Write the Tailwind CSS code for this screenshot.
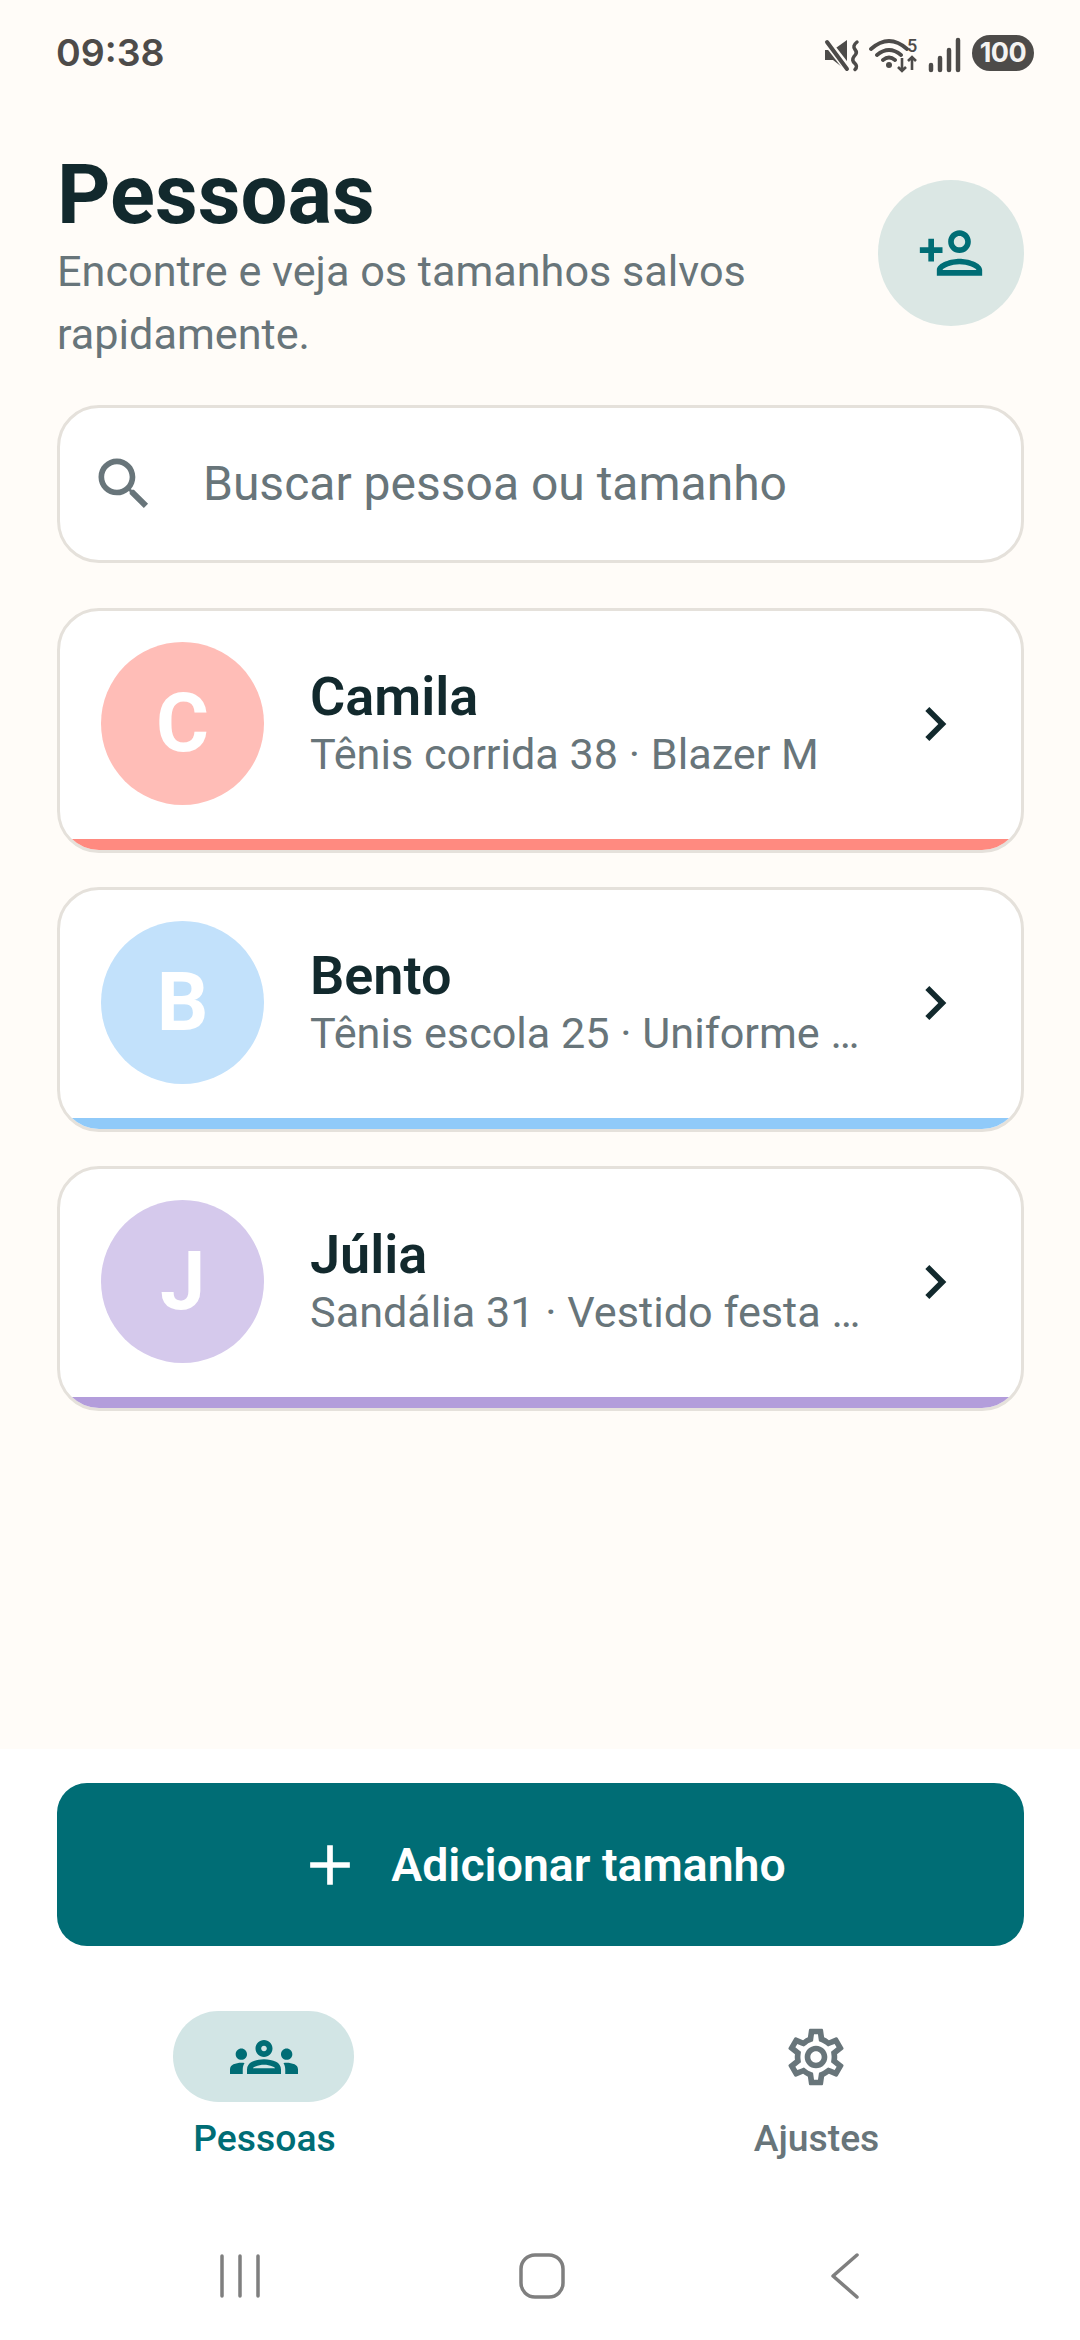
<!DOCTYPE html>
<html lang="pt">
<head>
<meta charset="utf-8">
<script src="https://cdn.jsdelivr.net/npm/@tailwindcss/browser@4"></script>
</head>
<body class="m-0">
<div class="w-[1080px] h-[2340px] flex flex-col bg-[#fffcf8] font-['Roboto',sans-serif] overflow-hidden">
  <div class="h-[106px] flex justify-between items-start pl-[56px] pr-[46px] pt-[30px] shrink-0">
    <span class="font-['Inter',sans-serif] text-[37.500px] leading-[46px] font-semibold text-[#4d4b49]">09:38</span>
    <div class="flex items-start gap-[10px]">
      <svg class="w-[140px] h-[40px] mt-[4px] text-[#4d4b49]" viewBox="42 32 140 40" fill="none" stroke="currentColor">
        <path d="M45 48h8l14 -10v31l-14 -11h-8z" fill="currentColor" stroke="none"/>
        <path d="M47 40l21 27" stroke="#fffcf8" stroke-width="8"/>
        <path d="M47 40l20 27" stroke-width="4" stroke-linecap="round"/>
        <path d="M77 40q-5 4 -2 7.500q3 3.500 -1 7q-3 4 1 7q3 3 0 6" stroke-width="3.500"  stroke-linecap="round"/>
        <path d="M91 47q18 -16 36 0M97 53q12 -10 24 0M103 58q6 -5 12 0" stroke-width="3.800" stroke-linecap="round"/>
        <circle cx="109" cy="63" r="3" fill="currentColor" stroke="none"/>
        <text x="127" y="50" font-size="18" font-weight="500" fill="currentColor" stroke="none" font-family="Roboto">5</text>
        <path d="M122 56v13M118 65l4 4l4 -4M132 68v-13M128 59l4 -4l4 4" stroke-width="2.600"/>
        <path d="M151 63v5M160 56v12M169 48v20M178 38v30" stroke-width="4.500" stroke-linecap="round"/>
      </svg>
      <div class="font-['Inter',sans-serif] w-[62px] h-[36px] mt-[5px] rounded-full bg-[#4d4b49] text-[#f4f3f1] text-[27px] tracking-[-0.5px] leading-[36px] font-bold text-center">100</div>
    </div>
  </div>

  <main class="flex-1 flex flex-col pl-[57px] pr-[56px] min-h-0">
    <div class="flex justify-between items-start pt-[44px]">
      <div class="w-[760px]">
        <h1 class="text-[83.200px] leading-[90px] font-bold text-[#12292d]">Pessoas</h1>
        <p class="text-[43.200px] leading-[63px] text-[#68757a]">Encontre e veja os tamanhos salvos rapidamente.</p>
      </div>
      <button class="w-[146px] h-[146px] mt-[30px] rounded-full bg-[#dbe7e4] flex items-center justify-center">
        <svg class="w-[68px] h-[68px] text-[#006d75]" viewBox="0 0 24 24" fill="currentColor"><path d="M15 12c2.210 0 4-1.790 4-4s-1.790-4-4-4-4 1.790-4 4 1.790 4 4 4zm0-6c1.100 0 2 .900 2 2s-.900 2-2 2-2-.900-2-2 .900-2 2-2zm0 8c-2.670 0-8 1.340-8 4v2h16v-2c0-2.660-5.330-4-8-4zm-6 4c.220-.720 3.310-2 6-2 2.700 0 5.800 1.290 6 2H9zm-3-3v-3h3v-2H6V7H4v3H1v2h3v3z"/></svg>
      </button>
    </div>

    <div class="mt-[39px] h-[158px] rounded-[42px] border-[3px] border-[#e5e1db] bg-white flex items-center pl-[30px] shrink-0">
      <svg class="w-[68px] h-[68px] text-[#68757a]" viewBox="0 0 24 24" fill="currentColor"><path d="M15.500 14h-.790l-.280-.270C15.410 12.590 16 11.110 16 9.500 16 5.910 13.090 3 9.500 3S3 5.910 3 9.500 5.910 16 9.500 16c1.610 0 3.090-.590 4.230-1.570l.270.280v.790l5 4.990L20.490 19l-4.990-5zm-6 0C7.010 14 5 11.990 5 9.500S7.010 5 9.500 5 14 7.010 14 9.500 11.990 14 9.500 14z"/></svg>
      <span class="ml-[45px] text-[48px] leading-[56px] text-[#68757a]">Buscar pessoa ou tamanho</span>
    </div>

    <div class="mt-[45px] flex flex-col gap-[34px]">
      <div class="h-[245px] rounded-[42px] border-[3px] border-[#e5e1db] bg-white overflow-hidden flex flex-col">
        <div class="flex-1 flex items-center pl-[41px] pr-[52px] pb-[3px]">
          <div class="w-[163px] h-[163px] rounded-full bg-[#ffbdb7] flex items-center justify-center text-white text-[81px] font-bold shrink-0">C</div>
          <div class="ml-[46px] flex-1 min-w-0">
            <div class="text-[54px] leading-[62px] font-semibold text-[#12292d]">Camila</div>
            <div class="text-[43.200px] leading-[54px] text-[#68757a] whitespace-nowrap">Tênis corrida 38 · Blazer M</div>
          </div>
          <svg class="w-[68px] h-[68px] shrink-0 text-[#12292d]" viewBox="0 0 24 24" fill="currentColor"><path d="M10 6L8.590 7.410 13.170 12l-4.580 4.590L10 18l6-6z"/></svg>
        </div>
        <div class="h-[11px] bg-[#ff8a80] shrink-0"></div>
      </div>
      <div class="h-[245px] rounded-[42px] border-[3px] border-[#e5e1db] bg-white overflow-hidden flex flex-col">
        <div class="flex-1 flex items-center pl-[41px] pr-[52px] pb-[3px]">
          <div class="w-[163px] h-[163px] rounded-full bg-[#c2e1fb] flex items-center justify-center text-white text-[81px] font-bold shrink-0">B</div>
          <div class="ml-[46px] flex-1 min-w-0">
            <div class="text-[54px] leading-[62px] font-semibold text-[#12292d]">Bento</div>
            <div class="text-[43.200px] leading-[54px] text-[#68757a] whitespace-nowrap">Tênis escola 25 · Uniforme …</div>
          </div>
          <svg class="w-[68px] h-[68px] shrink-0 text-[#12292d]" viewBox="0 0 24 24" fill="currentColor"><path d="M10 6L8.590 7.410 13.170 12l-4.580 4.590L10 18l6-6z"/></svg>
        </div>
        <div class="h-[11px] bg-[#90caf9] shrink-0"></div>
      </div>
      <div class="h-[245px] rounded-[42px] border-[3px] border-[#e5e1db] bg-white overflow-hidden flex flex-col">
        <div class="flex-1 flex items-center pl-[41px] pr-[52px] pb-[3px]">
          <div class="w-[163px] h-[163px] rounded-full bg-[#d5c9ec] flex items-center justify-center text-white text-[81px] font-bold shrink-0">J</div>
          <div class="ml-[46px] flex-1 min-w-0">
            <div class="text-[54px] leading-[62px] font-semibold text-[#12292d]">Júlia</div>
            <div class="text-[43.200px] leading-[54px] text-[#68757a] whitespace-nowrap">Sandália 31 · Vestido festa …</div>
          </div>
          <svg class="w-[68px] h-[68px] shrink-0 text-[#12292d]" viewBox="0 0 24 24" fill="currentColor"><path d="M10 6L8.590 7.410 13.170 12l-4.580 4.590L10 18l6-6z"/></svg>
        </div>
        <div class="h-[11px] bg-[#b39ddb] shrink-0"></div>
      </div>
    </div>
  </main>

  <footer class="h-[591px] bg-white shrink-0 flex flex-col">
    <div class="pl-[57px] pr-[56px] pt-[34px]">
      <button class="w-full h-[163px] rounded-[30px] bg-[#006d75] flex items-center justify-center text-white text-[46.400px] leading-[54px] font-semibold">
        <svg class="w-[68px] h-[68px] mr-[27px] ml-[1px]" viewBox="0 0 24 24" fill="currentColor"><path d="M19 13h-6v6h-2v-6H5v-2h6V5h2v6h6v2z"/></svg>
        Adicionar tamanho
      </button>
    </div>
    <nav class="mt-[65px] flex justify-between pl-[173px] pr-[174px]">
      <div class="w-[181px] flex flex-col items-center">
        <div class="w-[181px] h-[91px] rounded-full bg-[#d2e5e5] flex items-center justify-center">
          <svg class="w-[68px] h-[68px] text-[#006d75]" viewBox="0 0 24 24" fill="currentColor"><path d="M4 13c1.100 0 2-.900 2-2 0-1.100-.900-2-2-2s-2 .900-2 2c0 1.100.900 2 2 2zm1.130 1.100C4.760 14.040 4.390 14 4 14c-.990 0-1.930.210-2.780.580C.480 14.900 0 15.620 0 16.430V18h4.500v-1.610c0-.830.230-1.610.630-2.290zM20 13c1.100 0 2-.900 2-2 0-1.100-.900-2-2-2s-2 .900-2 2c0 1.100.900 2 2 2zm4 3.430c0-.810-.480-1.530-1.220-1.850C21.930 14.210 20.990 14 20 14c-.390 0-.760.040-1.130.100.400.680.630 1.460.630 2.290V18H24v-1.570zM16.240 13.650c-1.170-.520-2.610-.900-4.240-.900-1.630 0-3.070.390-4.240.900C6.680 14.130 6 15.210 6 16.390V18h12v-1.610c0-1.180-.680-2.260-1.760-2.740zM8.070 16c.090-.230.130-.390.910-.690.970-.380 1.990-.560 3.020-.560s2.050.180 3.020.560c.770.300.810.460.910.690H8.070zM12 8c.550 0 1 .450 1 1s-.450 1-1 1-1-.450-1-1 .450-1 1-1m0-2c-1.660 0-3 1.340-3 3s1.340 3 3 3 3-1.340 3-3-1.340-3-3-3z"/></svg>
        </div>
        <span class="mt-[12px] pl-[2px] text-[37.300px] leading-[48px] font-medium text-[#006d75]">Pessoas</span>
      </div>
      <div class="w-[181px] flex flex-col items-center">
        <div class="w-[181px] h-[91px] flex items-center justify-center">
          <svg class="w-[68px] h-[68px] text-[#68757a]" viewBox="0 0 24 24" fill="currentColor"><path d="M19.430 12.980c.040-.320.070-.640.070-.980 0-.340-.030-.660-.070-.980l2.110-1.650c.190-.150.240-.420.120-.640l-2-3.460c-.090-.160-.260-.250-.440-.250-.060 0-.120.010-.170.030l-2.490 1c-.520-.400-1.080-.730-1.690-.980l-.380-2.650C14.460 2.180 14.250 2 14 2h-4c-.250 0-.460.180-.490.420l-.380 2.650c-.610.250-1.170.590-1.690.980l-2.490-1c-.060-.020-.120-.030-.180-.030-.170 0-.340.090-.430.250l-2 3.460c-.130.220-.070.490.120.640l2.110 1.650c-.040.320-.070.650-.070.980 0 .330.030.660.070.980l-2.110 1.650c-.190.150-.240.420-.120.640l2 3.460c.090.160.260.250.440.250.060 0 .120-.010.170-.030l2.490-1c.520.400 1.080.730 1.690.980l.380 2.650c.030.240.240.420.490.420h4c.250 0 .460-.180.490-.420l.380-2.650c.610-.250 1.170-.590 1.690-.980l2.490 1c.060.020.120.030.180.030.170 0 .340-.090.430-.250l2-3.460c.120-.220.070-.490-.120-.640l-2.110-1.650zm-1.980-1.710c.040.310.050.520.050.730 0 .210-.020.430-.050.730l-.140 1.130.890.700 1.080.84-.700 1.210-1.270-.510-1.040-.420-.900.680c-.430.320-.840.560-1.250.730l-1.060.43-.160 1.130-.200 1.350h-1.400l-.190-1.350-.160-1.130-1.060-.43c-.430-.180-.830-.410-1.230-.710l-.910-.700-1.060.43-1.270.510-.700-1.210 1.080-.840.890-.700-.140-1.130c-.030-.310-.050-.540-.050-.740s.02-.430.05-.730l.14-1.130-.89-.700-1.080-.84.700-1.210 1.270.51 1.040.42.900-.68c.430-.320.840-.560 1.250-.73l1.060-.43.160-1.130.200-1.350h1.390l.190 1.350.160 1.130 1.060.43c.430.180.83.410 1.230.71l.910.700 1.060-.43 1.270-.51.700 1.210-1.070.85-.89.700.140 1.130zM12 8c-2.210 0-4 1.790-4 4s1.790 4 4 4 4-1.790 4-4-1.790-4-4-4zm0 6c-1.100 0-2-.900-2-2s.900-2 2-2 2 .900 2 2-.900 2-2 2z"/></svg>
        </div>
        <span class="mt-[12px] pl-[2px] text-[37.300px] leading-[48px] font-medium text-[#68757a]">Ajustes</span>
      </div>
    </nav>
    <div class="mt-[91px] flex justify-between items-center px-[220px]">
      <svg class="w-[40px] h-[46px] text-[#7f7f7f]" viewBox="0 0 40 46" fill="none" stroke="currentColor" stroke-width="3.500" stroke-linecap="round"><path d="M2 3v40M20 3v40M38 3v40"/></svg>
      <svg class="w-[46px] h-[46px] mr-[6px] text-[#7f7f7f]" viewBox="0 0 46 46" fill="none" stroke="currentColor" stroke-width="3.500"><rect x="2" y="2" width="42" height="42" rx="14"/></svg>
      <svg class="w-[30px] h-[46px] text-[#7f7f7f]" viewBox="0 0 30 46" fill="none" stroke="currentColor" stroke-width="3.500" stroke-linecap="round" stroke-linejoin="round"><path d="M27 2L3 23l24 21" /></svg>
    </div>
  </footer>
</div>
</body>
</html>
